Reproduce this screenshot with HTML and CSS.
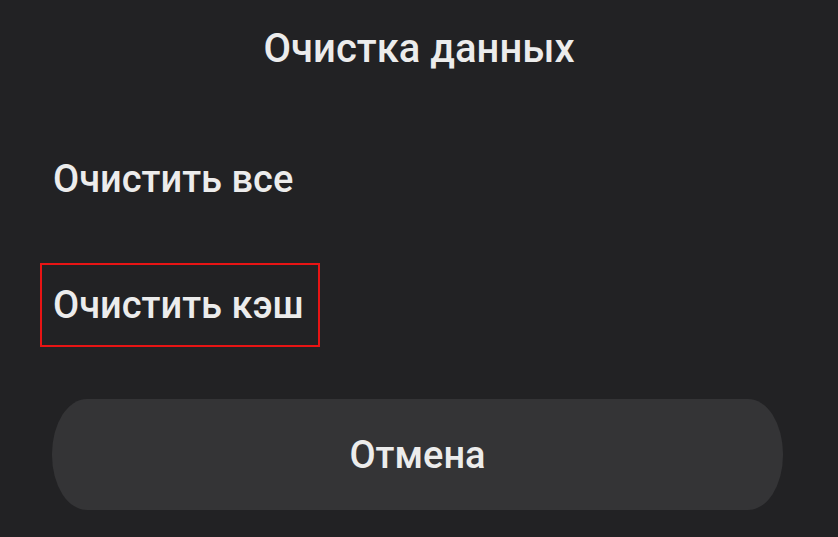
FILE: index.html
```html
<!DOCTYPE html>
<html lang="ru">
<head>
    <meta charset="UTF-8" />
    <meta name="viewport" content="width=device-width, initial-scale=1.0" />
    <title>Очистка данных</title>
    <link rel="stylesheet" href="styles.css">
</head>
<body>
    <main class="sheet">
        <h1 class="sheet-title">Очистка данных</h1>

        <ul class="options">
            <li class="option">Очистить все</li>
            <li class="option"><span class="highlight">Очистить кэш</span></li>
        </ul>

        <button class="cancel">Отмена</button>
    </main>
</body>
</html>
```

FILE: styles.css
```css
body {
    margin: 0;
    background: #222224;
    color: #ececec;
    font-family: Roboto, "Noto Sans", sans-serif;
}
.sheet {
    display: flex;
    flex-direction: column;
    height: 537px;
}
.sheet-title {
    margin: 0;
    height: 98px;
    line-height: 98px;
    font-size: 40px;
    font-weight: 500;
    text-align: center;
}
.options {
    list-style: none;
    margin: 0;
    padding: 18px 0 0 53px;
}
.option {
    height: 126px;
    display: flex;
    align-items: center;
    font-size: 38px;
    font-weight: 500;
}
.highlight {
    display: inline-block;
    line-height: 80px;
    border: 2px solid #e81414;
    margin-left: -13px;
    padding: 0 14px 0 11px;
}
.cancel {
    margin: 31px 55px 0 52px;
    height: 111px;
    border: none;
    border-radius: 35px / 55px;
    background: #343436;
    color: #ececec;
    font-family: inherit;
    font-size: 38px;
    font-weight: 500;
    padding: 0;
}
```
